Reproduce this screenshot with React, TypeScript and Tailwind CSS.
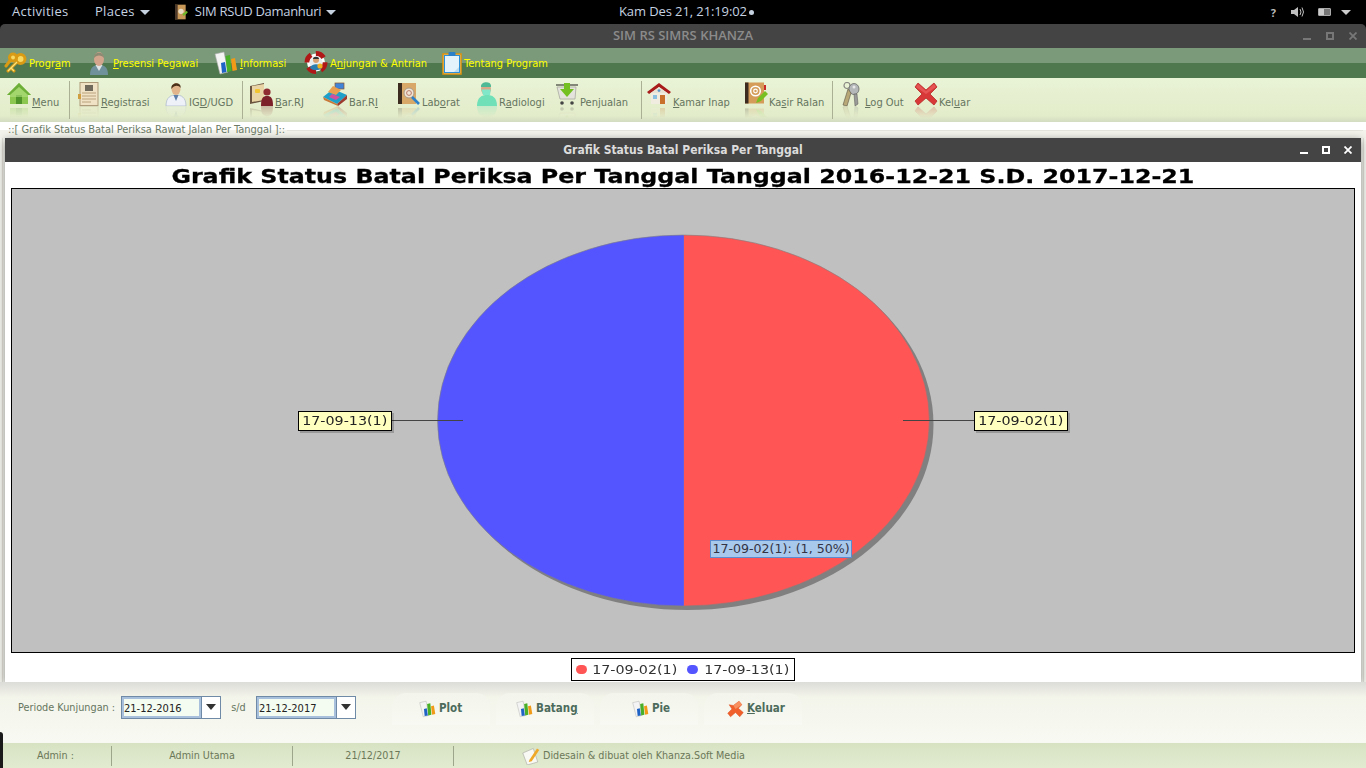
import React from 'react';

const ui = '"DejaVu Sans Condensed", "Noto Sans", sans-serif';
const gnome = '"Open Sans", "Noto Sans", sans-serif';
const chart = '"DejaVu Sans", sans-serif';

type IconProps = { className?: string };

const Keys = ({ className }: IconProps) => (
  <svg viewBox="0 0 24 24" className={className}>
    <g fill="none" stroke="#d99a14" strokeWidth="3">
      <circle cx="16.5" cy="8" r="4.5" fill="#f8d860" />
      <circle cx="9" cy="6.5" r="3.5" fill="#f8d860" />
      <path d="M13 11 L4 20 M7 17 L10 20 M6.5 9 L2 15" strokeLinecap="round" />
    </g>
    <path d="M13 11 L4 20 M7 17 L10 20" stroke="#fbe27a" strokeWidth="1.2" fill="none" />
  </svg>
);
const Person = ({ className }: IconProps) => (
  <svg viewBox="0 0 24 24" className={className}>
    <path d="M3 24 C3 16 7 14 12 14 C17 14 21 16 21 24 Z" fill="#6f919c" />
    <path d="M8.5 14 L12 20 L15.5 14 Z" fill="#dfe5e5" />
    <ellipse cx="12" cy="8" rx="5" ry="7" fill="#d3a58c" />
    <path d="M7 7 C6.5 0 17.5 0 17 7 C15 3.5 9 3.5 7 7 Z" fill="#8c8a72" />
  </svg>
);
const Books = ({ className }: IconProps) => (
  <svg viewBox="0 0 24 24" className={className}>
    <path d="M1 3 L10 1 L14 21 L6 23 Z" fill="#f4f4f4" stroke="#a9a9a9" strokeWidth=".6" />
    <path d="M7 12 L11 11 L12.5 21 L8 22 Z" fill="#1d62c4" />
    <path d="M11.5 5 L16 4 L17.5 20 L13 21 Z" fill="#48b028" />
    <path d="M17 8 L21 7 L23 19 L18.5 20 Z" fill="#f09a18" />
  </svg>
);
const Lifebuoy = ({ className }: IconProps) => (
  <svg viewBox="0 0 24 24" className={className}>
    <circle cx="12" cy="11.5" r="9" fill="#fff" stroke="#b01818" strokeWidth="5" strokeDasharray="9 5" />
    <circle cx="12" cy="11.5" r="6.5" fill="#e8eef0" />
    <path d="M6 17 C7 12 17 12 18 17 C15 20 9 20 6 17 Z" fill="#2a7fb0" />
    <circle cx="12" cy="9" r="3" fill="#d8a070" />
    <path d="M9 8 C9 5 15 5 15 8 Z" fill="#333" />
    <circle cx="16" cy="15" r="2.6" fill="#f0b020" />
  </svg>
);
const Clipboard = ({ className }: IconProps) => (
  <svg viewBox="0 0 24 24" className={className}>
    <rect x="3" y="3" width="18" height="20" fill="#fff" stroke="#d9920f" strokeWidth="1.6" />
    <rect x="4.5" y="4.5" width="15" height="17" fill="#e3f2fb" stroke="#2d8fd8" strokeWidth="1" />
    <path d="M14 21 L19 16 L19 21 Z" fill="#b9dcf2" />
    <rect x="8.5" y="1" width="7" height="4" rx="1" fill="#2a7fc8" />
  </svg>
);
const Home = ({ className }: IconProps) => (
  <svg viewBox="0 0 24 24" className={className}>
    <path d="M12 1 L24 13 L21 13 L21 22 L3 22 L3 13 L0 13 Z" fill="#8cc850" />
    <path d="M12 1 L24 13 L21 13 L12 5 L3 13 L0 13 Z" fill="#6cae38" />
    <rect x="9" y="13" width="6" height="9" fill="#4f9428" />
    <path d="M3 13 L12 5 L21 13 L21 15 L3 15 Z" fill="#b2e080" opacity=".6" />
  </svg>
);
const Registrasi = ({ className }: IconProps) => (
  <svg viewBox="0 0 24 24" className={className}>
    <rect x="3" y="0.5" width="18" height="23" fill="#f0e2c4" stroke="#ad9a78" />
    <rect x="8" y="3" width="8" height="6" fill="#6f6a5c" />
    <path d="M5 11 H19 M5 14 H19 M5 17 H19 M5 20 H14" stroke="#b8a27e" strokeWidth="1" />
    <rect x="1" y="12" width="3" height="5" fill="#d0a040" />
  </svg>
);
const Doctor = ({ className }: IconProps) => (
  <svg viewBox="0 0 24 24" className={className}>
    <path d="M2 24 C2 15 7 13 12 13 C17 13 22 15 22 24 Z" fill="#eef2f8" stroke="#a8b4c8" strokeWidth=".7" />
    <path d="M9.5 13 L12 19 L14.5 13 Z" fill="#5d7ea8" />
    <ellipse cx="12" cy="7" rx="4.5" ry="6" fill="#e2b48c" />
    <path d="M7.5 7 C6 0 18 -1 16.5 6 C15 3 10 3 7.5 7 Z" fill="#4a3018" />
  </svg>
);
const FolderPerson = ({ className }: IconProps) => (
  <svg viewBox="0 0 24 24" className={className}>
    <path d="M1 4 L15 1 L15 19 L1 22 Z" fill="#6a5440" />
    <path d="M3 4 L15 2 L15 18 L3 20 Z" fill="#e8d4a4" />
    <rect x="6" y="7" width="5" height="4" rx="1" fill="#f2c530" />
    <path d="M12 24 C12 16 14 14 18 14 C22 14 24 16 24 24 Z" fill="#7c1f28" />
    <circle cx="18" cy="10" r="3.6" fill="#8e2a30" />
  </svg>
);
const Bed = ({ className }: IconProps) => (
  <svg viewBox="0 0 24 24" className={className}>
    <rect x="12" y="1" width="9" height="6" fill="#3f84d8" stroke="#8c5830" strokeWidth=".7" />
    <path d="M0 15 L10 7 L24 13 L14 22 Z" fill="#1fa0c8" />
    <path d="M5 10 L10 4 L18 8 L13 13 Z" fill="#e8a050" />
    <path d="M14 22 L24 13 L24 17 L15 24 Z" fill="#9c3c30" />
    <path d="M0 15 L14 22 L15 24 L1 18 Z" fill="#c87838" />
    <path d="M9 12 L17 15 L13 18 L6 15 Z" fill="#d050a0" />
  </svg>
);
const Lab = ({ className }: IconProps) => (
  <svg viewBox="0 0 24 24" className={className}>
    <rect x="1" y="1" width="18" height="21" fill="#d8a868" />
    <rect x="1" y="1" width="4" height="21" fill="#3c2c20" />
    <circle cx="12" cy="11" r="5" fill="#efe4d4" stroke="#a89a88" strokeWidth="1" />
    <circle cx="12" cy="11" r="2.4" fill="none" stroke="#b87868" strokeWidth="1" />
    <path d="M15 15 L22 22" stroke="#2e80c8" strokeWidth="2.6" />
  </svg>
);
const Surgeon = ({ className }: IconProps) => (
  <svg viewBox="0 0 24 24" className={className}>
    <path d="M2 24 C2 15 7 13 12 13 C17 13 22 15 22 24 Z" fill="#6fe0b8" />
    <ellipse cx="11" cy="7" rx="5" ry="6" fill="#d8a888" />
    <path d="M6 5 C5.5 -1 16.5 -1 16 4 L16 5 Z" fill="#4fb894" />
    <path d="M6.5 7.5 L15.8 7.5 L15 13 L8 13 Z" fill="#80e8c8" />
  </svg>
);
const Cart = ({ className }: IconProps) => (
  <svg viewBox="0 0 24 24" className={className}>
    <path d="M2 5 L21 5 L20 17 L5 17 Z" fill="#e4e4dc" stroke="#a8a8a0" strokeWidth=".8" />
    <path d="M1 3 H23" stroke="#4c4c44" strokeWidth="1.3" />
    <circle cx="7" cy="21" r="1.8" fill="#444" />
    <circle cx="17" cy="21" r="1.8" fill="#444" />
    <path d="M9 1 H15 V7 H19 L12 15 L5 7 H9 Z" fill="#74c020" />
  </svg>
);
const House = ({ className }: IconProps) => (
  <svg viewBox="0 0 24 24" className={className}>
    <rect x="4" y="9" width="16" height="13" fill="#f0ece0" />
    <path d="M12 1 L24 10 L22 12 L12 5 L2 12 L0 10 Z" fill="#a81c1c" />
    <rect x="13" y="13" width="5" height="9" fill="#c8702c" />
    <rect x="6" y="13" width="4" height="4" fill="#8cc0e0" />
    <path d="M12 5 L20 11 L4 11 Z" fill="#e8e2d4" />
    <circle cx="12" cy="8.6" r="1.4" fill="#5a98c8" />
  </svg>
);
const Address = ({ className }: IconProps) => (
  <svg viewBox="0 0 24 24" className={className}>
    <rect x="1" y="0.5" width="19" height="21" fill="#d49c58" />
    <rect x="1" y="0.5" width="3.5" height="21" fill="#3c2c20" />
    <circle cx="11.5" cy="9" r="4.8" fill="none" stroke="#fff" strokeWidth="1.5" />
    <circle cx="11.5" cy="9" r="1.8" fill="none" stroke="#fff" strokeWidth="1.2" />
    <rect x="20" y="3" width="2" height="5" fill="#c82828" />
    <path d="M12 21 L14 16 L21 9 L24 12 L17 19 Z" fill="#78c020" />
  </svg>
);
const SilverKeys = ({ className }: IconProps) => (
  <svg viewBox="0 0 24 24" className={className}>
    <circle cx="7" cy="3.5" r="3" fill="none" stroke="#8a8a84" strokeWidth="1.2" />
    <ellipse cx="14" cy="7" rx="5" ry="5.5" fill="#b4b8b8" stroke="#6a6a68" strokeWidth=".8" />
    <path d="M14 12 L15 24 L18 22 L17 12 Z" fill="#9a9a98" stroke="#555" strokeWidth=".5" />
    <path d="M8 7 L3 23 L7 24 L11 11 Z" fill="#b8a878" stroke="#5c5444" strokeWidth=".6" />
    <circle cx="14" cy="5" r="1.5" fill="#e8e8e8" />
  </svg>
);
const RedX = ({ className }: IconProps) => (
  <svg viewBox="0 0 24 24" className={className}>
    <path d="M4 1 L12 8 L20 1 L23 5 L16 12 L23 19 L20 23 L12 16 L4 23 L1 19 L8 12 L1 5 Z" fill="#d83838" stroke="#b82828" strokeWidth=".8" strokeLinejoin="round" />
    <path d="M4 2 L12 9 L20 2 L22 5 L12 12 L2 5 Z" fill="#f06868" opacity=".6" />
  </svg>
);
const OrangeX = ({ className }: IconProps) => (
  <svg viewBox="0 0 24 24" className={className}>
    <path d="M3 6 L9 7 L17 1 L21 6 L16 11 L23 17 L18 23 L12 17 L5 23 L1 18 L7 12 Z" fill="#f0602c" stroke="#d84818" strokeWidth=".6" />
    <path d="M9 7 L17 1 L21 6 L12 12 Z" fill="#f89060" />
  </svg>
);
const Note = ({ className }: IconProps) => (
  <svg viewBox="0 0 24 24" className={className}>
    <path d="M1 8 L15 2 L21 20 L7 24 Z" fill="#f8f8f4" stroke="#a8a8a0" strokeWidth=".8" />
    <path d="M10 17 L20 2 L23 4 L13 19 L9 20 Z" fill="#f0a828" />
  </svg>
);
const AppBook = ({ className }: IconProps) => (
  <svg viewBox="0 0 24 24" className={className}>
    <rect x="3" y="1" width="16" height="22" fill="#c89858" />
    <rect x="3" y="1" width="4" height="22" fill="#4c3828" />
    <circle cx="12" cy="11" r="4" fill="#e8dcc4" />
    <path d="M14 15 L21 10 L22 13 L16 18 Z" fill="#6cb828" />
  </svg>
);

const Mirror = ({ Icon, width }: { Icon: React.FC<IconProps>; width: string }) => (
  <div className={`flex flex-col items-center ${width}`}>
    <Icon className="w-[24px] h-[24px] shrink-0" />
    <div className="h-[12px] overflow-hidden opacity-25 [mask-image:linear-gradient(to_bottom,black,transparent)]">
      <Icon className="w-[24px] h-[24px] -scale-y-100" />
    </div>
  </div>
);

const menus = [
  { icon: Keys, w: 'w-[82px]', size: 'w-[20px]', label: <>Progr<u>a</u>m</> },
  { icon: Person, w: 'w-[127px]', size: 'w-[22px]', label: <><u>P</u>resensi Pegawai</> },
  { icon: Books, w: 'w-[89px]', size: 'w-[22px]', label: <><u>I</u>nformasi</> },
  { icon: Lifebuoy, w: 'w-[138px]', size: 'w-[23px]', label: <>A<u>n</u>jungan &amp; Antrian</> },
  { icon: Clipboard, w: 'w-[120px]', size: 'w-[19px]', label: <>Tentan<u>g</u> Program</> },
];

const tools = [
  { icon: Home, w: 'w-[62px]', gap: 'ml-0', size: 'w-[23px]', label: <><u>M</u>enu</> },
  { sep: true, gap: 'ml-0' },
  { icon: Registrasi, w: 'w-[87px]', gap: 'ml-[8px]', size: 'w-[21px]', label: <><u>R</u>egistrasi</> },
  { icon: Doctor, w: 'w-[77px]', gap: 'ml-0', size: 'w-[22px]', label: <>IG<u>D</u>/UGD</> },
  { sep: true, gap: 'ml-0' },
  { icon: FolderPerson, w: 'w-[73px]', gap: 'ml-[6px]', size: 'w-[24px]', label: <><u>B</u>ar.RJ</> },
  { icon: Bed, w: 'w-[75px]', gap: 'ml-0', size: 'w-[25px]', label: <>Bar.R<u>I</u></> },
  { icon: Lab, w: 'w-[79px]', gap: 'ml-0', size: 'w-[23px]', label: <>Lab<u>o</u>rat</> },
  { icon: Surgeon, w: 'w-[80px]', gap: 'ml-0', size: 'w-[21px]', label: <>R<u>a</u>diologi</> },
  { icon: Cart, w: 'w-[85px]', gap: 'ml-0', size: 'w-[22px]', label: <>Pen<u>j</u>ualan</> },
  { sep: true, gap: 'ml-0' },
  { icon: House, w: 'w-[97px]', gap: 'ml-[5px]', size: 'w-[24px]', label: <><u>K</u>amar Inap</> },
  { icon: Address, w: 'w-[88px]', gap: 'ml-0', size: 'w-[23px]', label: <>Ka<u>s</u>ir Ralan</> },
  { sep: true, gap: 'ml-0' },
  { icon: SilverKeys, w: 'w-[73px]', gap: 'ml-[8px]', size: 'w-[22px]', label: <><u>L</u>og Out</> },
  { icon: RedX, w: 'w-[60px]', gap: 'ml-0', size: 'w-[23px]', label: <>Kel<u>u</u>ar</> },
];

const formButtons = [
  { icon: Books, label: <>Plot</>, pad: 'pl-[27px]' },
  { icon: Books, label: <>Batan<u>g</u></>, pad: 'pl-[20px]' },
  { icon: Books, label: <>Pie</>, pad: 'pl-[32px]' },
  { icon: OrangeX, label: <><u>K</u>eluar</>, pad: 'pl-[23px]' },
];

const WinControls = ({ tone, gap }: { tone: string; gap: string }) => (
  <div className={`flex items-center ${gap} ${tone}`}>
    <span className="block w-[8px] h-[2px] mt-[6px] bg-current" />
    <span className="block w-[8px] h-[8px] border-2 border-current" />
    <svg viewBox="0 0 8 8" className="w-[8px] h-[8px]">
      <path d="M0.5 0.5 L7.5 7.5 M7.5 0.5 L0.5 7.5" stroke="currentColor" strokeWidth="1.8" />
    </svg>
  </div>
);

const DateBox = ({ value }: { value: string }) => (
  <div className="flex h-[23px] w-[100px] border border-[#6f8aa6] bg-[#f4fbf0]">
    <div className="w-[79px] border-2 border-[#a9c0dc] leading-[19px] text-[#222] text-[11px]">{value}</div>
    <div className="flex-1 flex items-center justify-center border-l border-[#6f8aa6] bg-white">
      <span className="block border-x-[5px] border-x-transparent border-t-[6px] border-t-[#333]" />
    </div>
  </div>
);

// the chart text in the picture is drawn wider than the font's own width
const Wide = ({ children }: { children: React.ReactNode }) => (
  <span className="inline-block scale-x-[1.1] whitespace-nowrap">{children}</span>
);

export default function App() {
  return (
    <div className="relative w-[1366px] h-[768px] overflow-hidden flex flex-col bg-black" style={{ fontFamily: ui }}>
      {/* gnome panel */}
      <div className="h-[24px] shrink-0 flex items-center text-[13px] text-[#c6d2e0]" style={{ fontFamily: gnome }}>
        <div className="w-[619px] flex items-center pl-[12px]">
          <span className="w-[83px] tracking-[0.3px]">Activities</span>
          <span className="tracking-[0.3px]">Places</span>
          <span className="ml-[5px] border-x-[5px] border-x-transparent border-t-[5px] border-t-[#c6d2e0]" />
          <AppBook className="ml-[23px] w-[16px] h-[18px]" />
          <span className="ml-[6px] tracking-[-0.3px]">SIM RSUD Damanhuri</span>
          <span className="ml-[5px] border-x-[5px] border-x-transparent border-t-[5px] border-t-[#c6d2e0]" />
        </div>
        <div className="flex items-center">
          <span className="tracking-[-0.1px]">Kam Des 21, 21:19:02</span>
          <span className="ml-[2px] w-[5px] h-[5px] rounded-full bg-[#c6d2e0]" />
        </div>
        <div className="flex-1 flex items-center justify-end pr-[15px] text-[#bbb]">
          <span className="text-[11px] font-bold mt-[2px]">?</span>
          <svg viewBox="0 0 14 12" className="ml-[15px] w-[14px] h-[12px]">
            <path d="M0 4 H3 L7 1 V11 L3 8 H0 Z" fill="#c0c0c0" />
            <path d="M9 3 Q11 6 9 9 M11 1.5 Q14 6 11 10.5" stroke="#c0c0c0" fill="none" />
          </svg>
          <span className="ml-[13px] block w-[13px] h-[8px] border border-[#aaa] rounded-[1px] bg-[#777]">
            <span className="block w-[5px] h-full bg-[#ccc]" />
          </span>
          <span className="ml-[10px] border-x-[5px] border-x-transparent border-t-[5px] border-t-[#ccc]" />
        </div>
      </div>

      {/* window title */}
      <div className="h-[24px] shrink-0 flex items-center rounded-t-[5px] bg-[#444444] relative">
        <div className="flex-1 text-center text-[13px] font-semibold text-[#8b8b8b]" style={{ fontFamily: gnome }}>
          SIM RS SIMRS KHANZA
        </div>
        <div className="absolute right-[9px] top-[8px]">
          <WinControls tone="text-[#777]" gap="gap-[15px]" />
        </div>
      </div>

      {/* menu bar */}
      <div className="h-[30px] shrink-0 flex items-center pl-[6px] bg-[linear-gradient(to_bottom,#7a9a7a_0%,#7a9a7a_50%,#50784f_50%,#50784f_100%)] text-[11px] text-[#ffff00]">
        {menus.map((m, i) => (
          <div key={i} className={`flex items-center gap-[3px] ${m.w}`}>
            <div className={`flex justify-center shrink-0 ${m.size}`}>
              <m.icon className="w-[24px] h-[24px] shrink-0" />
            </div>
            <span className="mt-[2px] whitespace-nowrap">{m.label}</span>
          </div>
        ))}
      </div>

      {/* toolbar */}
      <div className="h-[44px] shrink-0 flex items-center pl-[7px] bg-[linear-gradient(to_bottom,#e9f3d6,#e3ecca_85%,#d3dcc0)] text-[11px] text-[#66755f]">
        {tools.map((t, i) =>
          t.sep ? (
            <div key={i} className="w-[1px] h-[38px] bg-[#a9b094] shrink-0" />
          ) : (
            <div key={i} className={`flex items-center gap-[2px] shrink-0 ${t.w} ${t.gap}`}>
              {t.icon && <Mirror Icon={t.icon} width={t.size as string} />}
              <span className="mt-[7px] whitespace-nowrap">{t.label}</span>
            </div>
          ),
        )}
      </div>

      {/* main panel */}
      <div className="flex-1 flex flex-col bg-[#f5f6ee]">
        <div className="h-[16px] shrink-0 flex items-center pl-[8px] bg-[linear-gradient(to_bottom,#ffffff_50%,#f3f3ec_50%)] text-[11px] text-[#6b7a66]">
          <span className="whitespace-nowrap tracking-[-0.05px]">::[ Grafik Status Batal Periksa Rawat Jalan Per Tanggal ]::</span>
          <span className="flex-1 h-[1px] ml-[2px] mr-[3px] bg-[#e4e4dc]" />
        </div>

        {/* dialog */}
        <div className="mx-[2px] px-[2px] h-[544px] shrink-0 border-x border-[#e2e2da]">
          <div className="h-full flex flex-col bg-white shadow-[0_2px_8px_rgba(0,0,0,0.45)]">
            <div className="h-[24px] shrink-0 relative flex items-center justify-center bg-[#444444] text-[12px] font-bold text-[#dcdcdc]">
              Grafik Status Batal Periksa Per Tanggal
              <div className="absolute right-[9px] top-[8px]">
                <WinControls tone="text-white" gap="gap-[14px]" />
              </div>
            </div>
            <div className="h-[26px] shrink-0 text-center text-[20px] leading-[28px] font-bold text-black whitespace-nowrap" style={{ fontFamily: chart }}>
              <span className="inline-block scale-x-[1.187] [-webkit-text-stroke:0.3px_black]">
                Grafik Status Batal Periksa Per Tanggal Tanggal 2016-12-21 S.D. 2017-12-21
              </span>
            </div>
            <div className="mx-[6px] h-[465px] shrink-0 relative border border-black bg-[#c0c0c0] text-[13px] text-[#222]" style={{ fontFamily: chart }}>
              <svg viewBox="12 189 1342 463" className="absolute inset-0 w-full h-full">
                <ellipse cx="687.5" cy="424.5" rx="246" ry="185.5" fill="#808080" />
                <path d="M683.5 235 A246 185.5 0 0 0 683.5 606 Z" fill="#5555ff" stroke="#808080" strokeWidth=".6" />
                <path d="M683.5 235 A246 185.5 0 0 1 683.5 606 Z" fill="#ff5555" stroke="#808080" strokeWidth=".6" />
                <path d="M683.5 235.5 V605.5" stroke="#5555ff" strokeWidth=".8" />
                <path d="M391 420.5 H463 M903 420.5 H974" stroke="#444" strokeWidth="1" />
              </svg>
              <div className="absolute left-[286px] top-[222px] h-[20px] w-[94px] border border-black bg-[#ffffc0] shadow-[2px_2px_0_rgba(0,0,0,0.2)] text-center leading-[18px]">
                <Wide>17-09-13(1)</Wide>
              </div>
              <div className="absolute left-[962px] top-[222px] h-[20px] w-[94px] border border-black bg-[#ffffc0] shadow-[2px_2px_0_rgba(0,0,0,0.2)] text-center leading-[18px]">
                <Wide>17-09-02(1)</Wide>
              </div>
              <div className="absolute left-[698px] top-[351px] h-[18px] w-[142px] border border-[#5d8bd0] bg-[#a9c9ec] text-center leading-[16px] text-[12.6px] text-[#333345] whitespace-nowrap">
                17-09-02(1): (1, 50%)
              </div>
            </div>
            <div className="flex-1 flex justify-center items-start pt-[5px]">
              <div className="h-[23px] w-[224px] border-[1.5px] border-black flex items-center pl-[4px] text-[13px] text-[#333]" style={{ fontFamily: chart }}>
                <span className="w-[11px] h-[9px] rounded-full bg-[#ff5555]" />
                <span className="ml-[9px]"><Wide>17-09-02(1)</Wide></span>
                <span className="ml-[14px] w-[11px] h-[9px] rounded-full bg-[#5555ff]" />
                <span className="ml-[10px]"><Wide>17-09-13(1)</Wide></span>
              </div>
            </div>
          </div>
        </div>

        {/* form */}
        <div className="h-[60px] shrink-0 flex items-center pl-[18px] pb-[10px] bg-[linear-gradient(to_bottom,#dcdcd8,#f3f4ea_25%,#f8f9f2)] text-[10.8px] text-[#66755f]">
          <span className="w-[103px] whitespace-nowrap mt-[2px]">Periode Kunjungan :</span>
          <DateBox value="21-12-2016" />
          <span className="w-[35px] text-center mt-[2px]">s/d</span>
          <DateBox value="21-12-2017" />
          <div className="ml-[36px] flex gap-[6px] mt-[4px]">
            {formButtons.map((b, i) => (
              <div key={i} className={`w-[98px] h-[32px] flex items-center gap-[3px] rounded-t-[14px] bg-[linear-gradient(to_bottom,#f3f4eb,#f8f9f2)] font-bold text-[11.5px] text-[#4c6b5c] ${b.pad}`}>
                <b.icon className="w-[17px] h-[18px]" />
                <span>{b.label}</span>
              </div>
            ))}
          </div>
        </div>

        {/* status */}
        <div className="flex-1 flex items-center pt-[1px] border-t border-[#f8f8f2] bg-[linear-gradient(to_bottom,#d7e2c3,#e2ebd0)] text-[10.7px] text-[#6b7858]">
          <span className="w-[111px] pl-[37px]">Admin :</span>
          <span className="w-[1px] h-[20px] bg-[#9da68a]" />
          <span className="w-[180px] text-center">Admin Utama</span>
          <span className="w-[1px] h-[20px] bg-[#9da68a]" />
          <span className="w-[160px] text-center">21/12/2017</span>
          <span className="w-[1px] h-[20px] bg-[#9da68a]" />
          <Note className="ml-[68px] w-[18px] h-[18px]" />
          <span className="ml-[3px]">Didesain &amp; dibuat oleh Khanza.Soft Media</span>
        </div>
      </div>
      <div className="absolute left-0 bottom-0 w-[3px] h-[36px] rounded-tr-[3px] bg-[#1a1a1a]" />
    </div>
  );
}
